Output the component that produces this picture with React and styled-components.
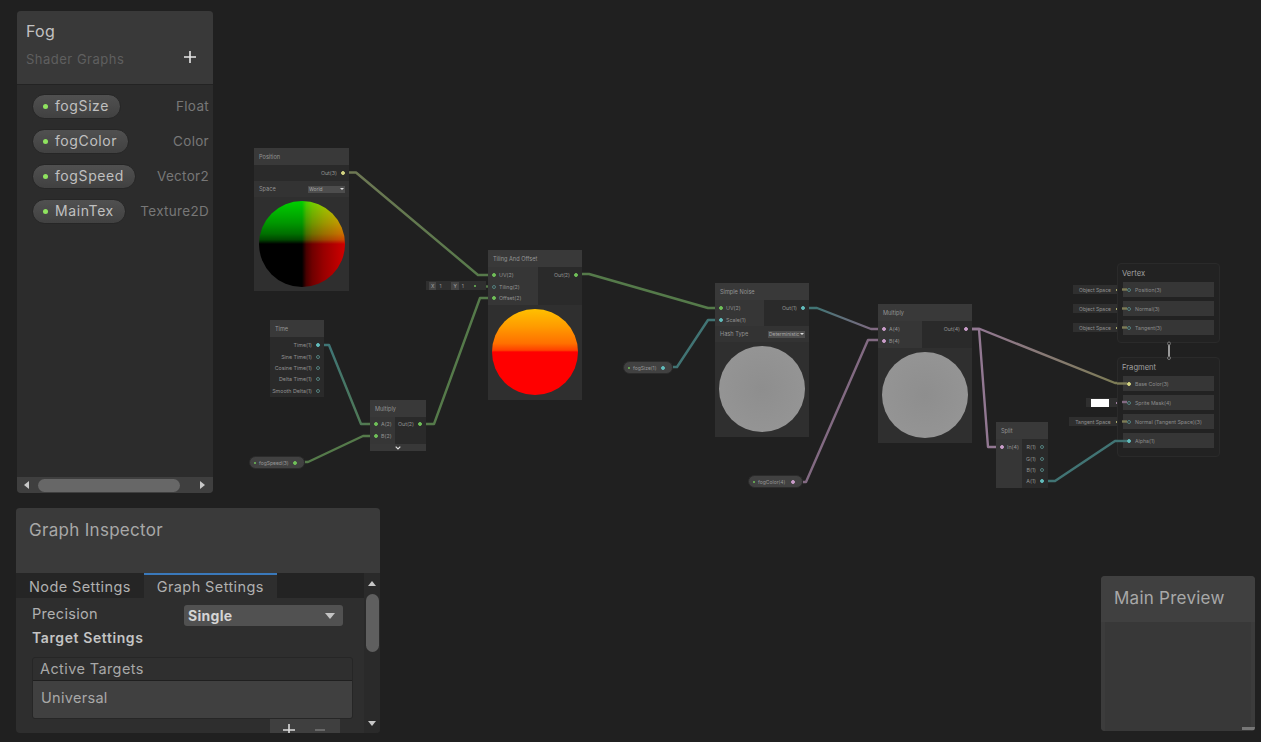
import React from 'react';
import styled, { createGlobalStyle } from 'styled-components';

const GlobalStyle = createGlobalStyle`
  html, body { margin: 0; padding: 0; background: #202020; }
  body { font-family: Inter, "Noto Sans", sans-serif; overflow: hidden; }
`;

const GREEN = '#6fbf58';
const TEAL = '#62bcbc';
const MAUVE = '#c99cc9';
const OLIVE = '#d4d482';

// --- graph canvas ---
const Canvas = styled.div`
  position: relative;
  width: 1261px;
  height: 742px;
  background: #202020;
  overflow: hidden;
`;

const WireLayer = styled.svg`
  position: absolute;
  left: 0;
  top: 0;
  pointer-events: none;
`;

const Node = styled.div`
  position: absolute;
  left: ${p => p.$x}px;
  top: ${p => p.$y}px;
  width: ${p => p.$w}px;
  background: #2f2f2f;
  display: flex;
  flex-direction: column;
`;

const NodeTitle = styled.div`
  height: 17px;
  flex: none;
  background: #393939;
  color: #959595;
  font-size: 5.6px;
  line-height: 18.5px;
  padding-left: 5px;
  white-space: nowrap;
`;

const PortArea = styled.div`
  display: flex;
  height: ${p => p.$h}px;
  background: #2a2a2a;
`;

const InCol = styled.div`
  width: ${p => p.$w}px;
  flex: none;
  background: #363636;
  display: flex;
  flex-direction: column;
  padding-top: ${p => p.$pt ?? 2.5}px;
  box-sizing: border-box;
`;

const OutCol = styled.div`
  flex: 1;
  min-width: 0;
  display: flex;
  flex-direction: column;
  padding-top: ${p => p.$pt ?? 2.5}px;
  box-sizing: border-box;
`;

const PortRow = styled.div`
  display: flex;
  flex-direction: ${p => (p.$right ? 'row-reverse' : 'row')};
  align-items: center;
  height: 11.4px;
  flex: none;
  padding: 0 4px;
  gap: ${p => (p.$right ? 4 : 3)}px;
  color: #929292;
  font-size: 5.3px;
  white-space: nowrap;
`;

const Port = styled.span`
  width: 4px;
  height: 4px;
  flex: none;
  border-radius: 50%;
  box-sizing: border-box;
  background: ${p => (p.$open ? 'transparent' : p.$color)};
  border: 1px solid ${p => (p.$open ? '#53817f' : p.$color)};
`;

const ControlRow = styled.div`
  height: 16px;
  display: flex;
  align-items: center;
  justify-content: space-between;
  padding: 0 4px 0 5px;
  background: #333333;
  color: #929292;
  font-size: 5.6px;
`;

const MiniSelect = styled.div`
  width: ${p => p.$w}px;
  height: 7px;
  background: #4d4d4d;
  color: #a8a8a8;
  font-size: 4.9px;
  line-height: 7px;
  padding-left: 1px;
  display: flex;
  justify-content: space-between;
  align-items: center;
  white-space: nowrap;
  overflow: hidden;
`;

const MiniCaret = styled.span`
  width: 0;
  height: 0;
  flex: none;
  margin-right: 1px;
  border-left: 2px solid transparent;
  border-right: 2px solid transparent;
  border-top: 2px solid #dddddd;
`;

const PreviewWrap = styled.div`
  padding: 4px 4px ${p => p.$pb ?? 5}px;
  display: flex;
  justify-content: center;
`;

const Ball = styled.div`
  width: 86px;
  height: 86px;
  border-radius: 50%;
  background: ${p => p.$paint};
  background-blend-mode: ${p => p.$blend || 'normal'};
`;

const ExpandBar = styled.div`
  height: 7px;
  background: #383838;
  display: flex;
  align-items: center;
  justify-content: center;
  color: #e0e0e0;
`;

// --- property pills sitting on the graph ---
const PropertyNode = styled.div`
  position: absolute;
  left: ${p => p.$x}px;
  top: ${p => p.$y}px;
  width: ${p => p.$w}px;
  height: 13px;
  box-sizing: border-box;
  padding: 0 7px 0 4px;
  border-radius: 7px;
  background: #414141;
  border: 1px solid #2b2b2b;
  display: flex;
  align-items: center;
  gap: 3px;
  color: #989898;
  font-size: 5px;
  white-space: nowrap;
`;

const TinyDot = styled.span`
  width: 2px;
  height: 2px;
  flex: none;
  border-radius: 50%;
  background: ${p => p.$color || GREEN};
`;

const PropertyLabel = styled.span`
  flex: 1;
`;

// --- inline value tags to the left of ports ---
const ValueTag = styled.div`
  position: absolute;
  left: ${p => p.$x}px;
  top: ${p => p.$y}px;
  width: ${p => p.$w}px;
  height: 9px;
  background: #2f2f2f;
  color: #929292;
  font-size: 5px;
  display: flex;
  align-items: center;
  gap: 2px;
  padding: 0 3px;
  box-sizing: border-box;
  white-space: nowrap;
`;

const TagText = styled.span`
  flex: 1;
  text-align: center;
`;

const AxisChip = styled.span`
  background: #444444;
  padding: 0 2px;
  line-height: 8px;
  color: #a8a8a8;
`;

const AxisValue = styled.span`
  width: 10px;
  padding-left: 1px;
`;

const Swatch = styled.span`
  width: 18px;
  height: 8px;
  margin-left: 2px;
  background: #ffffff;
`;

// --- master stack ---
const Block = styled.div`
  position: absolute;
  left: 1117px;
  top: ${p => p.$y}px;
  width: 103px;
  height: ${p => p.$h}px;
  box-sizing: border-box;
  padding: 5px 5px 0;
  background: #222222;
  border: 1px solid #2a2a2a;
  border-radius: 4px;
  display: flex;
  flex-direction: column;
  gap: 4px;
`;

const BlockTitle = styled.div`
  color: #a0a0a0;
  font-size: 7.6px;
  height: 9px;
  line-height: 10px;
  margin-left: -1px;
`;

const BlockRow = styled.div`
  height: 15px;
  flex: none;
  background: #363636;
  display: flex;
  align-items: center;
  padding-left: 4px;
  gap: 3px;
  color: #8c8c8c;
  font-size: 5.2px;
  white-space: nowrap;
`;

const BlockPort = styled(Port)`
  margin-right: 1px;
`;

// --- floating windows ---
const Blackboard = styled.section`
  position: absolute;
  left: 17px;
  top: 11px;
  width: 196px;
  height: 482px;
  border-radius: 4px;
  overflow: hidden;
  background: #2c2c2c;
  display: flex;
  flex-direction: column;
`;

const BoardHead = styled.header`
  height: 74px;
  flex: none;
  box-sizing: border-box;
  padding: 10px 9px 0;
  background: #393939;
  border-bottom: 1px solid #232323;
`;

const BoardTitle = styled.div`
  color: #c2c2c2;
  font-size: 16px;
  line-height: 20px;
  letter-spacing: 0.3px;
`;

const BoardSubRow = styled.div`
  display: flex;
  justify-content: space-between;
  align-items: center;
  margin-top: 10px;
  padding-right: 8px;
  color: #5f5f5f;
  font-size: 13px;
  letter-spacing: 0.5px;
`;

const AddIcon = styled.svg`
  display: block;
  margin-top: -4px;
`;

const BoardList = styled.div`
  flex: 1;
  display: flex;
  flex-direction: column;
  gap: 10px;
  padding: 9px 4px 0 15px;
`;

const BoardRow = styled.div`
  display: flex;
  justify-content: space-between;
  align-items: center;
  height: 25px;
  padding-bottom: 2px;
  box-sizing: border-box;
  color: #777777;
  font-size: 13.5px;
  letter-spacing: 0.3px;
`;

const Pill = styled.div`
  height: 25px;
  margin-bottom: -2px;
  box-sizing: border-box;
  padding: 0 11px 2px 10px;
  border-radius: 13px;
  background: linear-gradient(#505050, #414141);
  border: 1px solid #262626;
  display: flex;
  align-items: center;
  gap: 7px;
  color: #c0c0c0;
  font-size: 14px;
  letter-spacing: 0.6px;
`;

const PillDot = styled.span`
  width: 5px;
  height: 5px;
  margin-top: 2px;
  border-radius: 50%;
  background: #8fe35f;
`;

const HScroll = styled.div`
  height: 16px;
  flex: none;
  background: #3f3f3f;
  display: flex;
  align-items: center;
  gap: 0;
  padding: 0 8px 0 7px;
`;

const Thumb = styled.div`
  height: 13px;
  width: 142px;
  margin: 0 auto 0 9px;
  border-radius: 7px;
  background: #676767;
`;

const Inspector = styled.section`
  position: absolute;
  left: 16px;
  top: 508px;
  width: 364px;
  height: 225px;
  border-radius: 4px;
  overflow: hidden;
  background: #2e2e2e;
  display: flex;
  flex-direction: column;
`;

const InspectorHead = styled.header`
  height: 65px;
  flex: none;
  box-sizing: border-box;
  padding: 11px 13px 0;
  background: #3a3a3a;
  color: #a8a8a8;
  font-size: 17px;
  line-height: 22px;
  letter-spacing: 0.3px;
`;

const InspectorMain = styled.div`
  flex: 1;
  display: flex;
  min-height: 0;
`;

const InspectorContent = styled.div`
  flex: 1;
  display: flex;
  flex-direction: column;
  min-width: 0;
`;

const Tabs = styled.div`
  height: 25px;
  flex: none;
  display: flex;
  background: #232323;
`;

const Tab = styled.div`
  box-sizing: border-box;
  padding: 0 13px 1px;
  display: flex;
  align-items: center;
  color: #b0b0b0;
  font-size: 14.5px;
  letter-spacing: 0.4px;
  background: ${p => (p.$active ? '#2e2e2e' : '#252525')};
  border-top: 2px solid ${p => (p.$active ? '#3a79bb' : 'transparent')};
`;

const Settings = styled.div`
  flex: 1;
  position: relative;
  box-sizing: border-box;
  padding: 7px 11px 0 16px;
`;

const FieldRow = styled.div`
  display: flex;
  align-items: center;
  height: 21px;
  color: #b0b0b0;
  font-size: 14.5px;
  letter-spacing: 0.3px;
`;

const FieldLabel = styled.div`
  width: 152px;
  flex: none;
  padding-bottom: 4px;
`;

const Select = styled.div`
  width: 159px;
  height: 21px;
  box-sizing: border-box;
  padding: 0 5px 0 4px;
  border-radius: 3px;
  background: #515151;
  color: #d4d4d4;
  font-weight: 700;
  font-size: 14px;
  letter-spacing: 0.3px;
  display: flex;
  align-items: center;
  justify-content: space-between;
`;

const Caret = styled.span`
  width: 0;
  height: 0;
  margin-right: 3px;
  border-left: 5px solid transparent;
  border-right: 5px solid transparent;
  border-top: 6px solid #c4c4c4;
`;

const SectionLabel = styled.div`
  margin-top: 2px;
  height: 20px;
  line-height: 20px;
  color: #c4c4c4;
  font-weight: 600;
  font-size: 14px;
  letter-spacing: 0.6px;
`;

const TargetList = styled.div`
  margin-top: 9px;
  height: 62px;
  box-sizing: border-box;
  border: 1px solid #262626;
  border-radius: 3px;
  overflow: hidden;
  display: flex;
  flex-direction: column;
`;

const TargetHead = styled.div`
  height: 23px;
  flex: none;
  box-sizing: border-box;
  padding-left: 7px;
  background: #2f2f2f;
  border-bottom: 1px solid #1f1f1f;
  color: #a8a8a8;
  font-size: 14.5px;
  letter-spacing: 0.4px;
  line-height: 22px;
`;

const TargetBody = styled.div`
  flex: 1;
  background: #404040;
  padding: 7px 8px 0;
  color: #a8a8a8;
  font-size: 14.5px;
  letter-spacing: 0.3px;
  line-height: 20px;
`;

const ListFooter = styled.div`
  position: absolute;
  right: 24px;
  bottom: 0;
  width: 70px;
  height: 14px;
  background: #3f3f3f;
  overflow: hidden;
  display: flex;
  align-items: flex-start;
  gap: 20px;
  padding: 5px 0 0 13px;
  box-sizing: border-box;
`;

const FooterIcon = styled.svg`
  flex: none;
  display: block;
`;

const VScroll = styled.div`
  width: 16px;
  flex: none;
  background: #2a2a2a;
  display: flex;
  flex-direction: column;
  align-items: center;
  padding-top: 8px;
  box-sizing: border-box;
`;

const VThumb = styled.div`
  width: 13px;
  height: 58px;
  margin: 8px 0 auto;
  border-radius: 7px;
  background: #5f5f5f;
`;

const Arrow = styled.span`
  width: 0;
  height: 0;
  margin: ${p => p.$m || 0};
  border-left: 4.5px solid transparent;
  border-right: 4.5px solid transparent;
  border-${p => (p.$down ? 'top' : 'bottom')}: 5px solid #c8c8c8;
`;

const SideArrow = styled.span`
  width: 0;
  height: 0;
  flex: none;
  border-top: 4.5px solid transparent;
  border-bottom: 4.5px solid transparent;
  border-${p => (p.$right ? 'left' : 'right')}: 5px solid #c8c8c8;
`;

const PreviewWindow = styled.section`
  position: absolute;
  left: 1101px;
  top: 576px;
  width: 154px;
  height: 155px;
  border-radius: 4px;
  overflow: hidden;
  background: #383838;
  display: flex;
  flex-direction: column;
`;

const PreviewHead = styled.header`
  height: 46px;
  flex: none;
  box-sizing: border-box;
  padding: 11px 13px 0;
  background: #404040;
  color: #a8a8a8;
  font-size: 17px;
  letter-spacing: 0.25px;
  line-height: 22px;
`;

const PreviewBody = styled.div`
  flex: 1;
  display: flex;
  align-items: flex-end;
  justify-content: flex-end;
  border-left: 4px solid #3c3c3c;
  border-right: 4px solid #3c3c3c;
`;

const Resizer = styled.div`
  width: 13px;
  height: 3px;
  margin: 0 -4px 1px 0;
  background: #777777;
`;

const wires = [
  { id: 'posOut', d: 'M346 172.5H356L478 275H494', from: '#6f7854', to: '#557a4a', x1: 346, x2: 494 },
  { id: 'timeOut', d: 'M318 345H329L361 424H375', from: '#3f7575', to: '#557a4a', x1: 330, x2: 372 },
  { id: 'speedOut', d: 'M305 462H308L363 436H375', from: '#557a4a', to: '#557a4a', x1: 305, x2: 375 },
  { id: 'mulOut', d: 'M421 424H434L480 298H494', from: '#557a4a', to: '#557a4a', x1: 421, x2: 494 },
  { id: 'tileOut', d: 'M576 274H589L708 308H722', from: '#557a4a', to: '#557a4a', x1: 576, x2: 722 },
  { id: 'sizeOut', d: 'M673 367H677L708 320H722', from: '#417474', to: '#417474', x1: 673, x2: 722 },
  { id: 'noiseOut', d: 'M803 308H817L871 329H884', from: '#417474', to: '#826a82', x1: 815, x2: 875 },
  { id: 'colorOut', d: 'M803 482H806L868 340H884', from: '#826a82', to: '#826a82', x1: 803, x2: 884 },
  { id: 'mulBase', d: 'M966 329H980L1115 383H1128', from: '#927892', to: '#7d7c56', x1: 980, x2: 1115 },
  { id: 'mulSplit', d: 'M966 329H979L988 447H1001', from: '#927892', to: '#927892', x1: 966, x2: 1001 },
  { id: 'alpha', d: 'M1042 481H1055L1115 441H1128', from: '#417474', to: '#417474', x1: 1042, x2: 1128 },
  { id: 'tiling', d: 'M481 286.5H494', from: '#557a4a', to: '#557a4a', x1: 481, x2: 494 },
];

const stubs = [
  { d: 'M1122 289.5H1127', c: '#7d7c56' },
  { d: 'M1122 308.5H1127', c: '#7d7c56' },
  { d: 'M1122 327.5H1127', c: '#7d7c56' },
  { d: 'M1122 402H1127', c: '#826a82' },
  { d: 'M1122 421.5H1127', c: '#7d7c56' },
  { d: 'M1117 383.5H1127', c: '#7d7c56' },
  { d: 'M1117 441H1127', c: '#417474' },
];

const Wires = () => (
  <WireLayer width="1261" height="742" fill="none">
    <defs>
      {wires.map(w => (
        <linearGradient key={w.id} id={w.id} gradientUnits="userSpaceOnUse" x1={w.x1} x2={w.x2} y1="0" y2="0">
          <stop offset="0" stopColor={w.from} />
          <stop offset="1" stopColor={w.to} />
        </linearGradient>
      ))}
    </defs>
    {wires.map(w => (
      <path key={w.id} d={w.d} stroke={`url(#${w.id})`} strokeWidth="2.4" strokeLinejoin="round" />
    ))}
  </WireLayer>
);

// drawn over the master stack, the stubs run across the block edge
const StackLinks = () => (
  <WireLayer width="1261" height="742" fill="none">
    {stubs.map(s => (
      <path key={s.d} d={s.d} stroke={s.c} strokeWidth="2.4" />
    ))}
    <path d="M1169 345V357" stroke="#9a9a9a" strokeWidth="2" />
    <circle cx="1169" cy="343.5" r="1.5" fill="#222" stroke="#777" />
    <circle cx="1169" cy="358" r="1.5" fill="#222" stroke="#777" />
  </WireLayer>
);

const positionPaint =
  'linear-gradient(to right, #000 50%, #480000 55%, #700000 62%, #980000 75%, #d00000 100%), linear-gradient(to top, #000 50%, #004800 55%, #007000 62%, #009800 75%, #00d000 100%)';
const tilingPaint = 'linear-gradient(to bottom, #ffc000 0%, #ff9c00 20%, #ff7000 40%, #ff4000 48%, #ff0000 50%, #ff0000 100%)';
const greyPaint = 'radial-gradient(circle, #8e8e8e 0%, #979797 100%)';

const In = ({ label, color, open }) => (
  <PortRow>
    <Port $color={color} $open={open} />
    {label}
  </PortRow>
);

const Out = ({ label, color, open }) => (
  <PortRow $right>
    <Port $color={color} $open={open} />
    {label}
  </PortRow>
);

const Graph = () => (
  <>
    <Wires />

    <Node $x={254} $y={148} $w={95}>
      <NodeTitle>Position</NodeTitle>
      <PortArea $h={16}>
        <OutCol $pt={2}>
          <Out label="Out(3)" color={OLIVE} />
        </OutCol>
      </PortArea>
      <ControlRow>
        Space
        <MiniSelect $w={36}>World<MiniCaret /></MiniSelect>
      </ControlRow>
      <PreviewWrap $pb={4}>
        <Ball $paint={positionPaint} $blend="screen" />
      </PreviewWrap>
    </Node>

    <Node $x={270} $y={320} $w={54}>
      <NodeTitle>Time</NodeTitle>
      <PortArea $h={60}>
        <OutCol>
          <Out label="Time(1)" color={TEAL} />
          <Out label="Sine Time(1)" open />
          <Out label="Cosine Time(1)" open />
          <Out label="Delta Time(1)" open />
          <Out label="Smooth Delta(1)" open />
        </OutCol>
      </PortArea>
    </Node>

    <Node $x={370} $y={400} $w={56}>
      <NodeTitle>Multiply</NodeTitle>
      <PortArea $h={27}>
        <InCol $w={25} $pt={1.5}>
          <In label="A(2)" color={GREEN} />
          <In label="B(2)" color={GREEN} />
        </InCol>
        <OutCol $pt={1.5}>
          <Out label="Out(2)" color={GREEN} />
        </OutCol>
      </PortArea>
      <ExpandBar>
        <svg width="6" height="4" viewBox="0 0 6 4" fill="none">
          <path d="M.7.7 3 3 5.3.7" stroke="currentColor" strokeWidth="1.2" />
        </svg>
      </ExpandBar>
    </Node>

    <PropertyNode $x={249} $y={456} $w={56}>
      <TinyDot />
      <PropertyLabel>fogSpeed(3)</PropertyLabel>
      <Port $color={GREEN} />
    </PropertyNode>

    <ValueTag $x={426} $y={281} $w={60}>
      <AxisChip>X</AxisChip>
      <AxisValue>1</AxisValue>
      <AxisChip>Y</AxisChip>
      <AxisValue>1</AxisValue>
      <TinyDot />
    </ValueTag>

    <Node $x={488} $y={250} $w={94}>
      <NodeTitle>Tiling And Offset</NodeTitle>
      <PortArea $h={38}>
        <InCol $w={50}>
          <In label="UV(2)" color={GREEN} />
          <In label="Tiling(2)" open />
          <In label="Offset(2)" color={GREEN} />
        </InCol>
        <OutCol>
          <Out label="Out(2)" color={GREEN} />
        </OutCol>
      </PortArea>
      <PreviewWrap>
        <Ball $paint={tilingPaint} />
      </PreviewWrap>
    </Node>

    <PropertyNode $x={623} $y={361} $w={50}>
      <TinyDot />
      <PropertyLabel>fogSize(1)</PropertyLabel>
      <Port $color={TEAL} />
    </PropertyNode>

    <Node $x={715} $y={283} $w={94}>
      <NodeTitle>Simple Noise</NodeTitle>
      <PortArea $h={26}>
        <InCol $w={49}>
          <In label="UV(2)" color={GREEN} />
          <In label="Scale(1)" color={TEAL} />
        </InCol>
        <OutCol>
          <Out label="Out(1)" color={TEAL} />
        </OutCol>
      </PortArea>
      <ControlRow>
        Hash Type
        <MiniSelect $w={36}>Deterministic<MiniCaret /></MiniSelect>
      </ControlRow>
      <PreviewWrap>
        <Ball $paint={greyPaint} />
      </PreviewWrap>
    </Node>

    <Node $x={878} $y={304} $w={94}>
      <NodeTitle>Multiply</NodeTitle>
      <PortArea $h={27}>
        <InCol $w={44}>
          <In label="A(4)" color={MAUVE} />
          <In label="B(4)" color={MAUVE} />
        </InCol>
        <OutCol>
          <Out label="Out(4)" color={MAUVE} />
        </OutCol>
      </PortArea>
      <PreviewWrap>
        <Ball $paint={greyPaint} />
      </PreviewWrap>
    </Node>

    <PropertyNode $x={748} $y={475} $w={55}>
      <TinyDot />
      <PropertyLabel>fogColor(4)</PropertyLabel>
      <Port $color={MAUVE} />
    </PropertyNode>

    <Node $x={996} $y={422} $w={52}>
      <NodeTitle>Split</NodeTitle>
      <PortArea $h={49}>
        <InCol $w={26}>
          <In label="In(4)" color={MAUVE} />
        </InCol>
        <OutCol>
          <Out label="R(1)" open />
          <Out label="G(1)" open />
          <Out label="B(1)" open />
          <Out label="A(1)" color={TEAL} />
        </OutCol>
      </PortArea>
    </Node>

    <ValueTag $x={1073} $y={285} $w={48}><TagText>Object Space</TagText><TinyDot $color={OLIVE} /></ValueTag>
    <ValueTag $x={1073} $y={304} $w={48}><TagText>Object Space</TagText><TinyDot $color={OLIVE} /></ValueTag>
    <ValueTag $x={1073} $y={323} $w={48}><TagText>Object Space</TagText><TinyDot $color={OLIVE} /></ValueTag>
    <ValueTag $x={1086} $y={398} $w={35}><Swatch /><TagText /><TinyDot $color={MAUVE} /></ValueTag>
    <ValueTag $x={1069} $y={417} $w={52}><TagText>Tangent Space</TagText><TinyDot $color={OLIVE} /></ValueTag>

    <Block $y={263} $h={80}>
      <BlockTitle>Vertex</BlockTitle>
      <BlockRow><BlockPort $open />Position(3)</BlockRow>
      <BlockRow><BlockPort $open />Normal(3)</BlockRow>
      <BlockRow><BlockPort $open />Tangent(3)</BlockRow>
    </Block>

    <Block $y={357} $h={100}>
      <BlockTitle>Fragment</BlockTitle>
      <BlockRow><BlockPort $color={OLIVE} />Base Color(3)</BlockRow>
      <BlockRow><BlockPort $open />Sprite Mask(4)</BlockRow>
      <BlockRow><BlockPort $open />Normal (Tangent Space)(3)</BlockRow>
      <BlockRow><BlockPort $color={TEAL} />Alpha(1)</BlockRow>
    </Block>

    <StackLinks />
  </>
);

const properties = [
  { name: 'fogSize', type: 'Float' },
  { name: 'fogColor', type: 'Color' },
  { name: 'fogSpeed', type: 'Vector2' },
  { name: 'MainTex', type: 'Texture2D' },
];

const App = () => (
  <Canvas>
    <GlobalStyle />
    <Graph />

    <Blackboard>
      <BoardHead>
        <BoardTitle>Fog</BoardTitle>
        <BoardSubRow>
          Shader Graphs
          <AddIcon width="12" height="12" viewBox="0 0 12 12">
            <path d="M6 0v12M0 6h12" stroke="#e6e6e6" strokeWidth="1.6" />
          </AddIcon>
        </BoardSubRow>
      </BoardHead>
      <BoardList>
        {properties.map(p => (
          <BoardRow key={p.name}>
            <Pill><PillDot />{p.name}</Pill>
            {p.type}
          </BoardRow>
        ))}
      </BoardList>
      <HScroll>
        <SideArrow />
        <Thumb />
        <SideArrow $right />
      </HScroll>
    </Blackboard>

    <Inspector>
      <InspectorHead>Graph Inspector</InspectorHead>
      <InspectorMain>
        <InspectorContent>
          <Tabs>
            <Tab>Node Settings</Tab>
            <Tab $active>Graph Settings</Tab>
          </Tabs>
          <Settings>
            <FieldRow>
              <FieldLabel>Precision</FieldLabel>
              <Select>Single<Caret /></Select>
            </FieldRow>
            <SectionLabel>Target Settings</SectionLabel>
            <TargetList>
              <TargetHead>Active Targets</TargetHead>
              <TargetBody>Universal</TargetBody>
            </TargetList>
            <ListFooter>
              <FooterIcon width="12" height="12" viewBox="0 0 12 12">
                <path d="M6 0v12M0 6h12" stroke="#dcdcdc" strokeWidth="1.6" />
              </FooterIcon>
              <FooterIcon width="10" height="12" viewBox="0 0 10 12">
                <path d="M0 6h10" stroke="#777777" strokeWidth="1.6" />
              </FooterIcon>
            </ListFooter>
          </Settings>
        </InspectorContent>
        <VScroll>
          <Arrow />
          <VThumb />
          <Arrow $down $m="0 0 7px" />
        </VScroll>
      </InspectorMain>
    </Inspector>

    <PreviewWindow>
      <PreviewHead>Main Preview</PreviewHead>
      <PreviewBody>
        <Resizer />
      </PreviewBody>
    </PreviewWindow>
  </Canvas>
);

export default App;
